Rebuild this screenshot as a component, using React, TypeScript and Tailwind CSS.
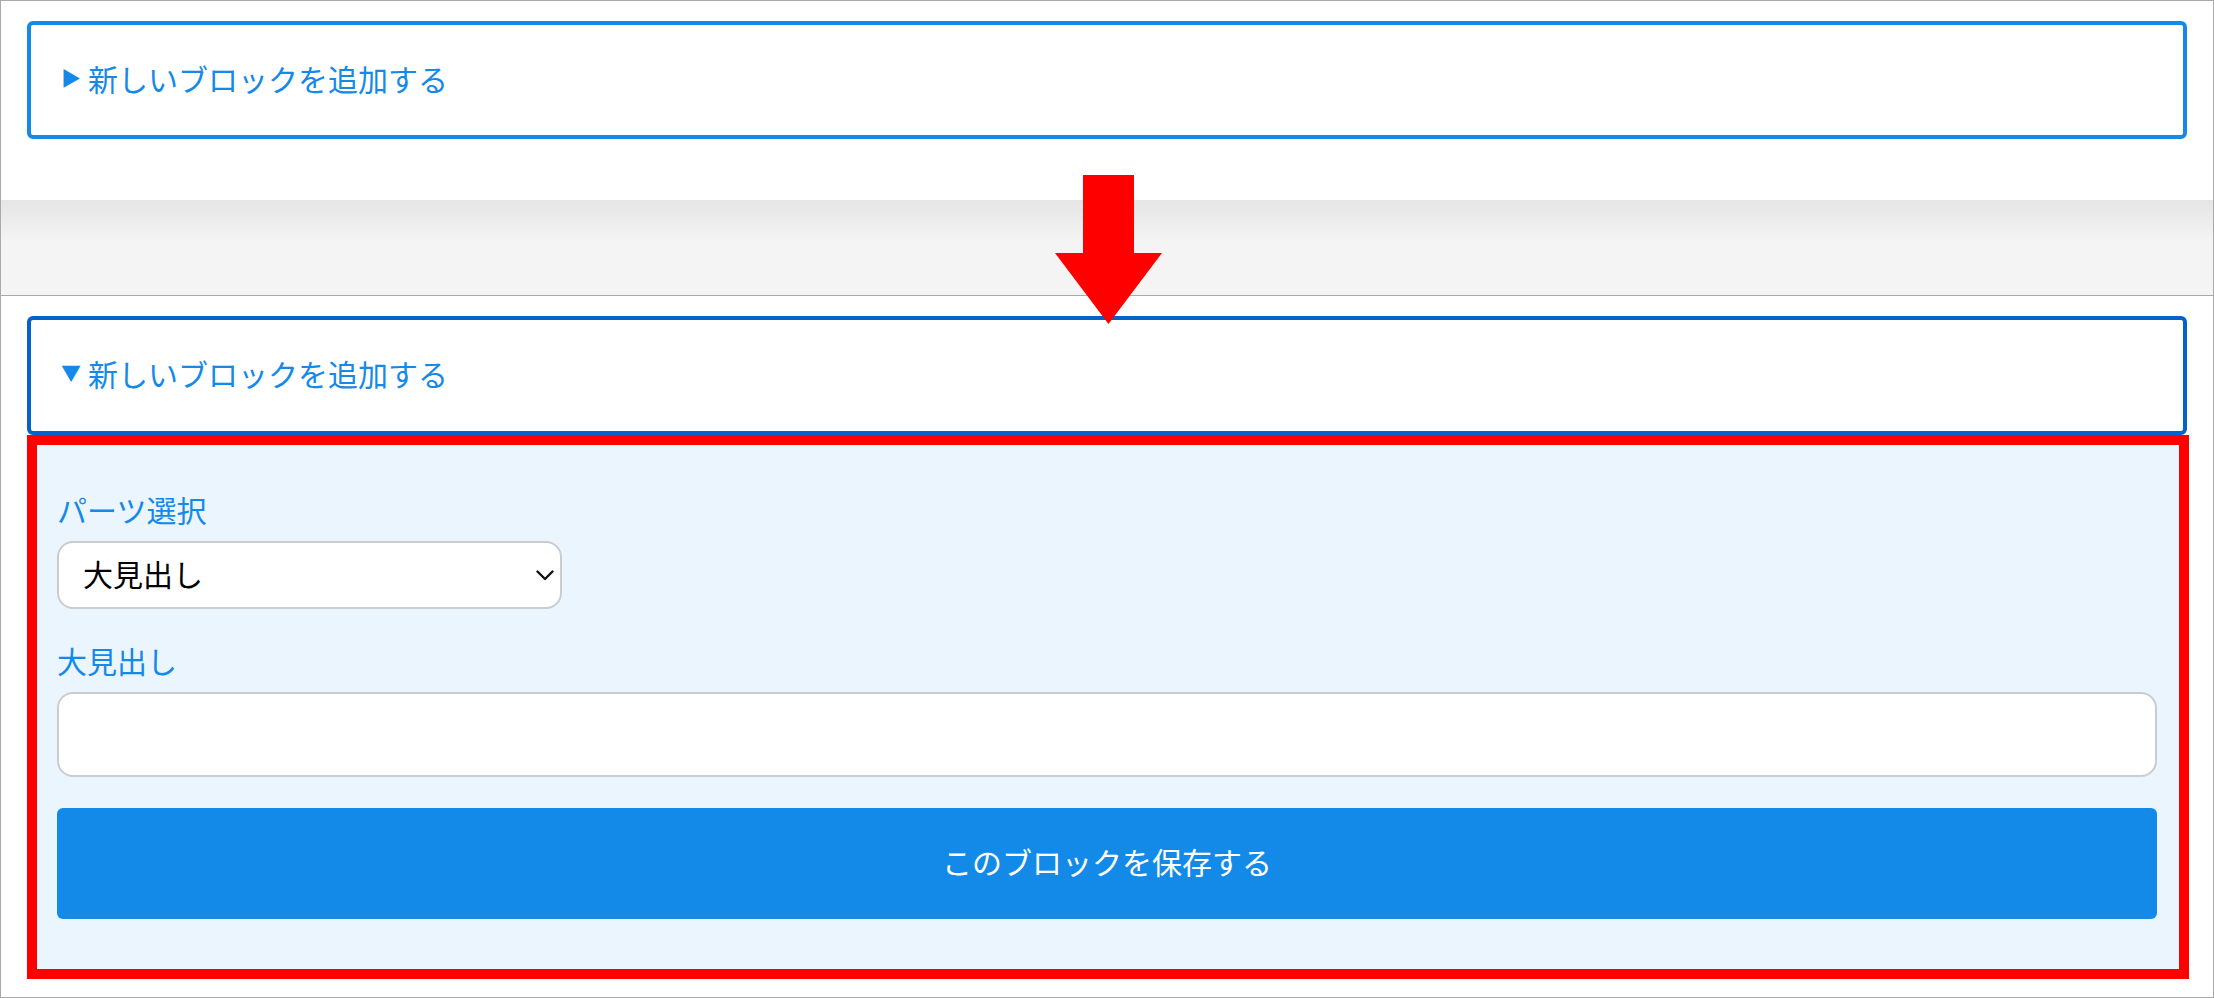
import React from "react";

function Chevron() {
  return (
    <svg width="18" height="11" viewBox="0 0 18 11" fill="none">
      <path d="M1.5 1.5 L9 9 L16.5 1.5" stroke="#111" strokeWidth="2.4" strokeLinecap="round" strokeLinejoin="round" />
    </svg>
  );
}

export default function App() {
  return (
    <div className="relative w-[2214px] h-[998px] overflow-hidden border border-[#aaaaaa] bg-white font-['Noto_Sans_CJK_JP',sans-serif]">
      {/* Collapsed state */}
      <div className="pt-[20px] pl-[26px] pr-[26px]">
        <div className="h-[118px] flex items-center pl-[30px] pb-[5px] border-4 border-[#1589e8] rounded-[6px] text-[30px] text-[#1589e8] leading-none">
          <span className="text-[20px] mr-[7px]">▶</span>
          <span>新しいブロックを追加する</span>
        </div>
      </div>

      {/* Separator band */}
      <div className="mt-[61px] h-[96px] border-b border-[#aaaaaa] bg-linear-to-b from-[#e5e5e5] to-[#f4f4f4] to-45%" />

      {/* Expanded state */}
      <div className="pt-[20px] pl-[26px] pr-[26px]">
        <div className="h-[119px] flex items-center pl-[30px] pb-[5px] border-4 border-[#0662cb] rounded-[6px] text-[30px] text-[#1589e8] leading-none">
          <span className="text-[20px] mr-[7px]">▼</span>
          <span>新しいブロックを追加する</span>
        </div>
        <div className="mr-[-2px] h-[544px] border-[10px] border-[#ff0000] bg-[#eaf5fe] pt-[42px] pl-[20px] pr-[22px] text-[30px]">
          <div className="leading-[45px] text-[#1589e8]">パーツ選択</div>
          <div className="mt-[9px] w-[505px] h-[68px] flex items-center justify-between pl-[24px] pr-[6px] pb-[4px] bg-white border-2 border-[#cccccc] rounded-[16px] text-black">
            <span className="leading-none">大見出し</span>
            <span className="pt-[4px]">
              <Chevron />
            </span>
          </div>
          <div className="mt-[29px] leading-[45px] text-[#1589e8]">大見出し</div>
          <div className="mt-[9px] h-[85px] bg-white border-2 border-[#cccccc] rounded-[16px]" />
          <div className="mt-[31px] h-[111px] flex items-center justify-center pb-[5px] bg-[#1389e8] rounded-[6px] text-white leading-none">
            このブロックを保存する
          </div>
        </div>
      </div>

      {/* Red arrow annotation */}
      <svg className="absolute left-[1054px] top-[174px]" width="107" height="149" viewBox="0 0 107 149">
        <polygon points="28,0 79,0 79,78 107,78 53.5,149 0,78 28,78" fill="#ff0000" />
      </svg>
    </div>
  );
}
